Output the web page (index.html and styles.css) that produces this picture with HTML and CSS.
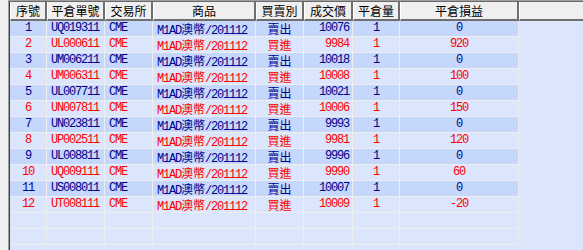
FILE: index.html
```html
<!DOCTYPE html>
<html>
<head>
<meta charset="utf-8">
<link rel="stylesheet" href="styles.css">
</head>
<body>
<div class="frame">
  <div class="gutter"></div>
  <div class="panel">
    <div class="panel-inner">
      <div class="row head">
        <div class="hc">序號</div>
        <div class="hc">平倉單號</div>
        <div class="hc">交易所</div>
        <div class="hc">商品</div>
        <div class="hc">買賣別</div>
        <div class="hc">成交價</div>
        <div class="hc">平倉量</div>
        <div class="hc">平倉損益</div>
        <div class="hc fill"></div>
      </div>
      <div class="rows">
        <div class="row odd blue"><div class="c ctr">1</div><div class="c lft">UQ019311</div><div class="c lft">CME</div><div class="c lft">M1AD<span class="cj">澳幣</span>/201112</div><div class="c ctr cj">賣出</div><div class="c rgt">10076</div><div class="c ctr">1</div><div class="c ctr">0</div><div class="f"></div></div>
        <div class="row red"><div class="c ctr">2</div><div class="c lft">UL000611</div><div class="c lft">CME</div><div class="c lft">M1AD<span class="cj">澳幣</span>/201112</div><div class="c ctr cj">買進</div><div class="c rgt">9984</div><div class="c ctr">1</div><div class="c ctr">920</div><div class="f"></div></div>
        <div class="row odd blue"><div class="c ctr">3</div><div class="c lft">UM006211</div><div class="c lft">CME</div><div class="c lft">M1AD<span class="cj">澳幣</span>/201112</div><div class="c ctr cj">賣出</div><div class="c rgt">10018</div><div class="c ctr">1</div><div class="c ctr">0</div><div class="f"></div></div>
        <div class="row red"><div class="c ctr">4</div><div class="c lft">UM006311</div><div class="c lft">CME</div><div class="c lft">M1AD<span class="cj">澳幣</span>/201112</div><div class="c ctr cj">買進</div><div class="c rgt">10008</div><div class="c ctr">1</div><div class="c ctr">100</div><div class="f"></div></div>
        <div class="row odd blue"><div class="c ctr">5</div><div class="c lft">UL007711</div><div class="c lft">CME</div><div class="c lft">M1AD<span class="cj">澳幣</span>/201112</div><div class="c ctr cj">賣出</div><div class="c rgt">10021</div><div class="c ctr">1</div><div class="c ctr">0</div><div class="f"></div></div>
        <div class="row red"><div class="c ctr">6</div><div class="c lft">UN007811</div><div class="c lft">CME</div><div class="c lft">M1AD<span class="cj">澳幣</span>/201112</div><div class="c ctr cj">買進</div><div class="c rgt">10006</div><div class="c ctr">1</div><div class="c ctr">150</div><div class="f"></div></div>
        <div class="row odd blue"><div class="c ctr">7</div><div class="c lft">UN023811</div><div class="c lft">CME</div><div class="c lft">M1AD<span class="cj">澳幣</span>/201112</div><div class="c ctr cj">賣出</div><div class="c rgt">9993</div><div class="c ctr">1</div><div class="c ctr">0</div><div class="f"></div></div>
        <div class="row red"><div class="c ctr">8</div><div class="c lft">UP002511</div><div class="c lft">CME</div><div class="c lft">M1AD<span class="cj">澳幣</span>/201112</div><div class="c ctr cj">買進</div><div class="c rgt">9981</div><div class="c ctr">1</div><div class="c ctr">120</div><div class="f"></div></div>
        <div class="row odd blue"><div class="c ctr">9</div><div class="c lft">UL008811</div><div class="c lft">CME</div><div class="c lft">M1AD<span class="cj">澳幣</span>/201112</div><div class="c ctr cj">賣出</div><div class="c rgt">9996</div><div class="c ctr">1</div><div class="c ctr">0</div><div class="f"></div></div>
        <div class="row red"><div class="c ctr">10</div><div class="c lft">UQ009111</div><div class="c lft">CME</div><div class="c lft">M1AD<span class="cj">澳幣</span>/201112</div><div class="c ctr cj">買進</div><div class="c rgt">9990</div><div class="c ctr">1</div><div class="c ctr">60</div><div class="f"></div></div>
        <div class="row odd blue"><div class="c ctr">11</div><div class="c lft">US008011</div><div class="c lft">CME</div><div class="c lft">M1AD<span class="cj">澳幣</span>/201112</div><div class="c ctr cj">賣出</div><div class="c rgt">10007</div><div class="c ctr">1</div><div class="c ctr">0</div><div class="f"></div></div>
        <div class="row red"><div class="c ctr">12</div><div class="c lft">UT008111</div><div class="c lft">CME</div><div class="c lft">M1AD<span class="cj">澳幣</span>/201112</div><div class="c ctr cj">買進</div><div class="c rgt">10009</div><div class="c ctr">1</div><div class="c ctr">-20</div><div class="f"></div></div>
        <div class="row"><div class="c"></div><div class="c"></div><div class="c"></div><div class="c"></div><div class="c"></div><div class="c"></div><div class="c"></div><div class="c"></div><div class="f"></div></div>
        <div class="row"><div class="c"></div><div class="c"></div><div class="c"></div><div class="c"></div><div class="c"></div><div class="c"></div><div class="c"></div><div class="c"></div><div class="f"></div></div>
      </div>
    </div>
  </div>
</div>
</body>
</html>
```

FILE: styles.css
```css
html, body {
  margin: 0;
  padding: 0;
}
body {
  width: 583px;
  height: 250px;
  overflow: hidden;
  background: #f0f0f0;
}
.frame {
  display: flex;
  height: 250px;
}
.gutter {
  width: 8px;
  flex: none;
  background: #f0f0f0;
}
.panel {
  flex: 1;
  border-left: 1px solid #a0a0a0;
  border-top: 1px solid #a0a0a0;
  background: #dbe5fb;
  overflow: hidden;
}
.panel-inner {
  border-left: 1px solid #404040;
  border-top: 1px solid #696969;
  height: 100%;
}
.row {
  display: grid;
  grid-template-columns: 37px 58px 48px 103px 48px 49px 47px 119px 1fr;
}
.head {
  height: 19px;
}
.hc {
  box-sizing: border-box;
  background: #efefef;
  border-left: 1px solid #ffffff;
  border-right: 2px solid #6f6f6f;
  border-bottom: 2px solid #6f6f6f;
  font-family: "Noto Sans CJK TC", sans-serif;
  font-size: 12px;
  line-height: 17px;
  text-align: center;
  color: #000;
}
.hc.fill {
  border-right: none;
}
.rows .row {
  height: 16px;
}
.c {
  box-sizing: border-box;
  border-right: 1px solid #eeeeee;
  border-bottom: 1px solid #eeeeee;
  font-family: "Liberation Mono", monospace;
  font-size: 12px;
  letter-spacing: -1.2px;
  line-height: 15px;
  white-space: nowrap;
  overflow: hidden;
}
.odd .c {
  background: #c5d8fb;
}
.blue .c {
  color: #00008b;
}
.red .c {
  color: #ff0000;
}
.cj, .c.cj {
  font-family: "Noto Sans CJK TC", sans-serif;
  font-size: 12px;
  letter-spacing: 0;
}
.ctr {
  text-align: center;
}
.lft {
  text-align: left;
  padding-left: 4px;
}
.rgt {
  text-align: right;
  padding-right: 3px;
}
```
